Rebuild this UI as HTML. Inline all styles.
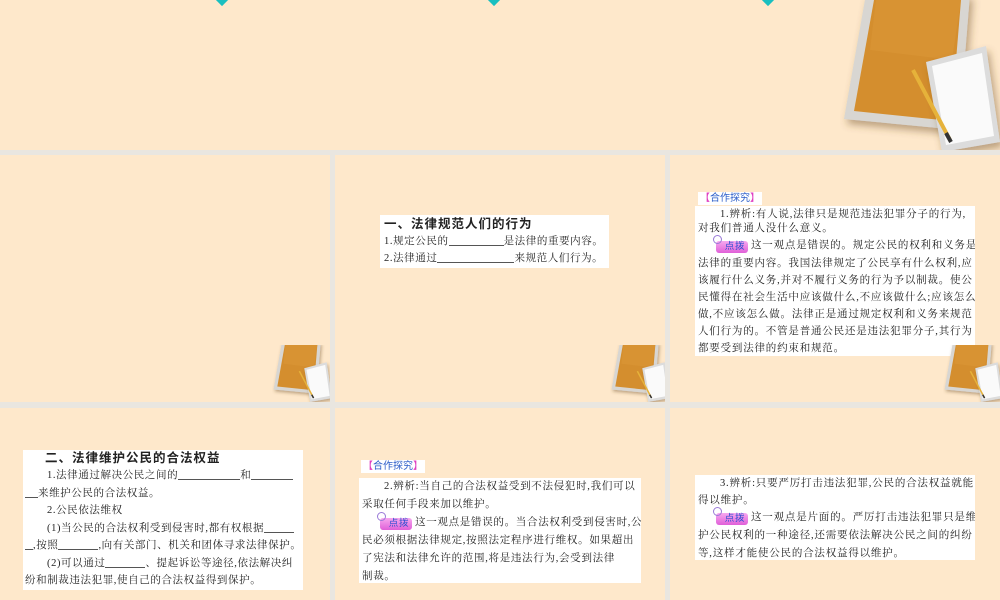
<!DOCTYPE html>
<html><head><meta charset="utf-8"><style>
*{margin:0;padding:0;box-sizing:border-box}
body{width:1000px;height:600px;background:#e9e6e0;position:relative;overflow:hidden;font-family:"Liberation Serif","Noto Serif CJK SC","Noto Sans CJK SC",serif;color:#222}
.s{position:absolute;background:#fee8cb;overflow:hidden}
.a{position:absolute}
.box{position:absolute;background:#fff;font-size:10.5px;line-height:18px;letter-spacing:0.6px;white-space:nowrap;overflow:hidden}
.t{font-family:"Liberation Sans","Noto Sans CJK SC",sans-serif;font-weight:bold;font-size:12.5px;letter-spacing:1px}
.u{display:inline-block;border-bottom:1px solid #555;height:12px;vertical-align:-2px}
.lab{position:absolute;background:#fff;font-family:"Liberation Sans","Noto Sans CJK SC",sans-serif;font-size:10px;line-height:13px;color:#2a5cc8;padding:0 2px}
.lab b{color:#e040c0;font-weight:normal}
.dp{display:inline-block;position:relative;width:32px;height:12px;line-height:12px;border-radius:3px;background:linear-gradient(#f7a8ef,#e060d8);color:#2a4fd0;font-family:"Liberation Sans","Noto Sans CJK SC",sans-serif;font-size:9.5px;text-align:center;vertical-align:-1px;margin-right:3px;padding-left:6px}
.dp:before{content:"";position:absolute;left:-3px;top:-6px;width:7px;height:7px;border:1px solid #9a7ad8;border-radius:50%}
.ind{padding-left:22px}
</style></head><body>
<svg width="0" height="0" style="position:absolute"><defs>
<filter id="sh" x="-20%" y="-20%" width="150%" height="150%"><feDropShadow dx="3" dy="5" stdDeviation="4" flood-color="#6a4a20" flood-opacity=".45"/></filter>
<g id="nb">
<g filter="url(#sh)">
<polygon points="26,-6 130,-6 119,130 4,119" fill="#d8d6d2"/>
</g>
<polygon points="34,0 121,0 111,121 14,111" fill="#d48e2e"/>
<polygon points="36,0 121,0 112,60 30,50" fill="#dc9838" opacity=".5"/>
<g filter="url(#sh)"><polygon points="86,62 146,46 160,142 102,152" fill="#dcdcdc"/></g>
<polygon points="92,66 142,53 154,136 106,145" fill="#fafafa"/>
<line x1="73" y1="70" x2="110" y2="140" stroke="#e6b23a" stroke-width="4"/>
<line x1="106" y1="133" x2="111" y2="142" stroke="#333" stroke-width="4"/>
</g></defs></svg>

<div class="s" style="left:0;top:0;width:1000px;height:150px">
<div class="a" style="left:217px;top:-6px;width:10px;height:10px;background:#19bfc0;transform:rotate(45deg)"></div>
<div class="a" style="left:489px;top:-6px;width:10px;height:10px;background:#19bfc0;transform:rotate(45deg)"></div>
<div class="a" style="left:763px;top:-6px;width:10px;height:10px;background:#19bfc0;transform:rotate(45deg)"></div>
<svg class="a" style="left:840px;top:0" width="160" height="155" viewBox="0 0 160 155"><use href="#nb"/></svg>
</div>

<div class="s" style="left:0;top:155px;width:330px;height:247px">
<svg class="a" style="left:272px;top:190px" width="60" height="58" viewBox="0 0 160 155"><use href="#nb"/></svg>
</div>
<div class="s" style="left:335px;top:155px;width:330px;height:247px">
<div class="box" style="left:45px;top:60px;width:229px;height:53px;padding:0 4px;line-height:17px">
<div class="t" style="line-height:18px">一、法律规范人们的行为</div>
<div>1.规定公民的<span class="u" style="width:55px"></span>是法律的重要内容。</div>
<div>2.法律通过<span class="u" style="width:77px"></span>来规范人们行为。</div>
</div>
<svg class="a" style="left:275px;top:190px" width="60" height="58" viewBox="0 0 160 155"><use href="#nb"/></svg>
</div>
<div class="s" style="left:670px;top:155px;width:330px;height:247px">
<div class="lab" style="left:28px;top:37px"><b>【</b>合作探究<b>】</b></div>
<div class="box" style="left:25px;top:51px;width:280px;height:150px;padding:0 3px;letter-spacing:0.8px;line-height:17px">
<div class="ind" style="line-height:14px;padding-top:2px">1.辨析:有人说,法律只是规范违法犯罪分子的行为,</div>
<div style="line-height:14px">对我们普通人没什么意义。</div>
<div class="ind" style="padding-left:18px;line-height:19px"><span class="dp">点拨</span>这一观点是错误的。规定公民的权利和义务是</div>
<div>法律的重要内容。我国法律规定了公民享有什么权利,应</div>
<div>该履行什么义务,并对不履行义务的行为予以制裁。使公</div>
<div>民懂得在社会生活中应该做什么,不应该做什么;应该怎么</div>
<div>做,不应该怎么做。法律正是通过规定权利和义务来规范</div>
<div>人们行为的。不管是普通公民还是违法犯罪分子,其行为</div>
<div>都要受到法律的约束和规范。</div>
</div>
<svg class="a" style="left:273px;top:190px" width="60" height="58" viewBox="0 0 160 155"><use href="#nb"/></svg>
</div>

<div class="s" style="left:0;top:408px;width:330px;height:192px">
<div class="box" style="left:23px;top:42px;width:280px;height:140px;padding:0 2px;line-height:17.5px">
<div class="t ind" style="padding-left:20px;line-height:17px">二、法律维护公民的合法权益</div>
<div class="ind">1.法律通过解决公民之间的<span class="u" style="width:62px"></span>和<span class="u" style="width:42px"></span></div>
<div><span class="u" style="width:13px"></span>来维护公民的合法权益。</div>
<div class="ind">2.公民依法维权</div>
<div class="ind">(1)当公民的合法权利受到侵害时,都有权根据<span class="u" style="width:30px"></span></div>
<div><span class="u" style="width:8px"></span>,按照<span class="u" style="width:40px"></span>,向有关部门、机关和团体寻求法律保护。</div>
<div class="ind">(2)可以通过<span class="u" style="width:40px"></span>、提起诉讼等途径,依法解决纠</div>
<div>纷和制裁违法犯罪,使自己的合法权益得到保护。</div>
</div>
</div>
<div class="s" style="left:335px;top:408px;width:330px;height:192px">
<div class="lab" style="left:26px;top:52px"><b>【</b>合作探究<b>】</b></div>
<div class="box" style="left:24px;top:70px;width:282px;height:105px;padding:0 3px;letter-spacing:0.7px">
<div class="ind">2.辨析:当自己的合法权益受到不法侵犯时,我们可以</div>
<div>采取任何手段来加以维护。</div>
<div class="ind" style="padding-left:18px"><span class="dp">点拨</span>这一观点是错误的。当合法权利受到侵害时,公</div>
<div>民必须根据法律规定,按照法定程序进行维权。如果超出</div>
<div>了宪法和法律允许的范围,将是违法行为,会受到法律</div>
<div>制裁。</div>
</div>
</div>
<div class="s" style="left:670px;top:408px;width:330px;height:192px">
<div class="box" style="left:25px;top:67px;width:280px;height:85px;padding:0 3px;letter-spacing:0.8px">
<div class="ind" style="line-height:17px">3.辨析:只要严厉打击违法犯罪,公民的合法权益就能</div>
<div style="line-height:17px">得以维护。</div>
<div class="ind" style="padding-left:18px"><span class="dp">点拨</span>这一观点是片面的。严厉打击违法犯罪只是维</div>
<div>护公民权利的一种途径,还需要依法解决公民之间的纠纷</div>
<div>等,这样才能使公民的合法权益得以维护。</div>
</div>
</div>
</body></html>
